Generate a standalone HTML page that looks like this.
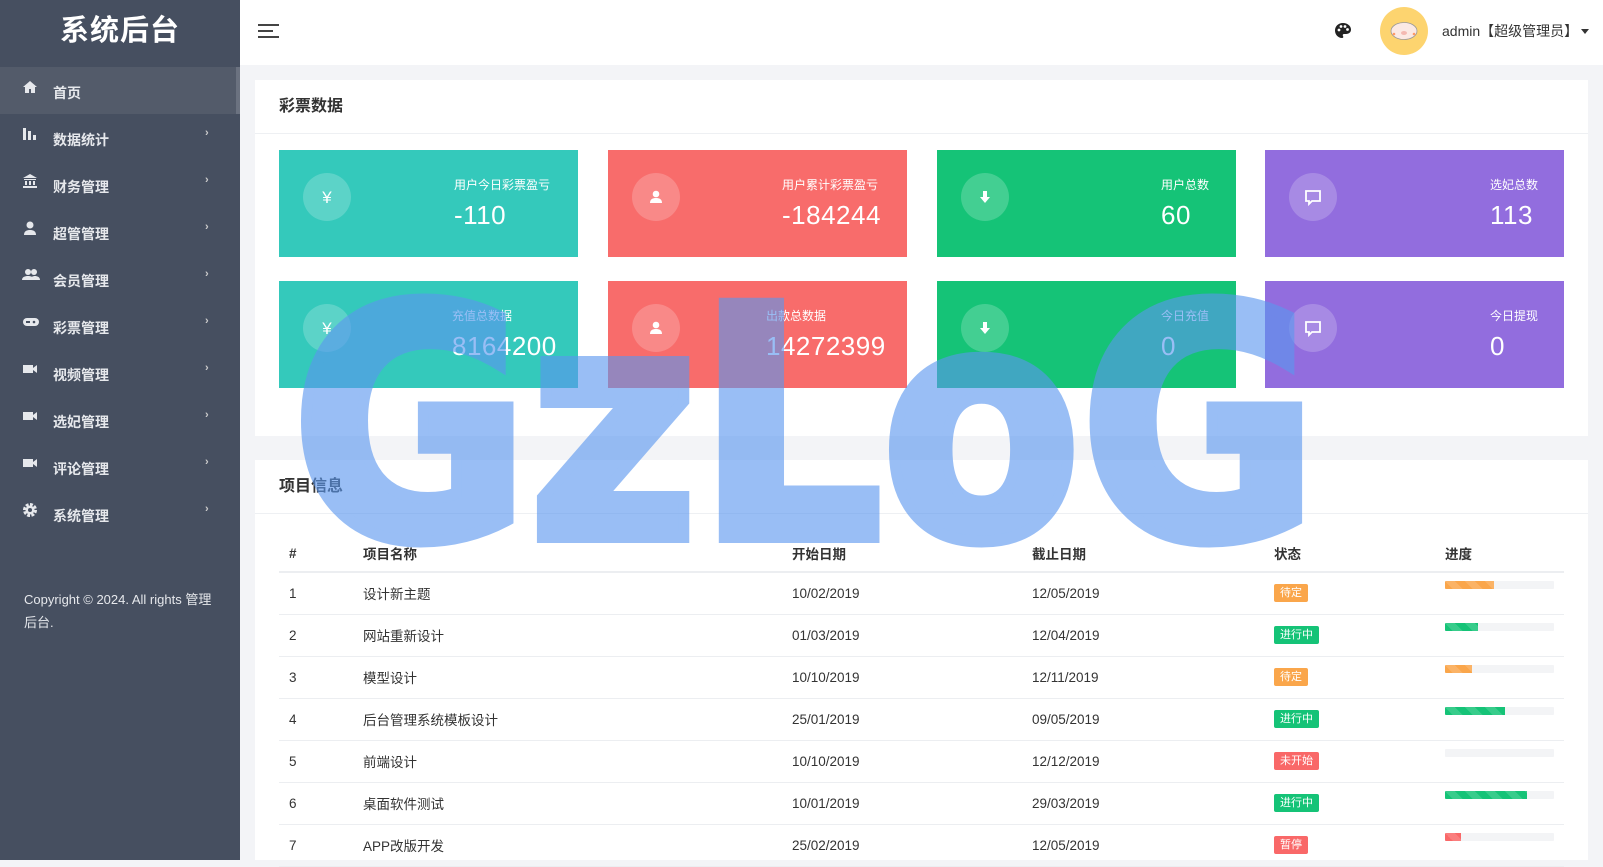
<!DOCTYPE html>
<html><head><meta charset="utf-8"><style>
*{margin:0;padding:0;box-sizing:border-box}
body{width:1603px;height:860px;overflow:hidden;background:#f3f4f7;font-family:"Liberation Sans","Noto Sans CJK SC",sans-serif;position:relative;color:#333}
.side{position:absolute;left:0;top:0;width:240px;height:860px;background:#464f60}
.logo{height:67px;color:#fff;font-size:29px;text-align:center;line-height:62px;font-weight:bold;letter-spacing:1px}
.item{height:47px;position:relative;color:#e6e8ec;font-size:14px;font-weight:bold}
.item.act{background:#535b6a;border-right:4px solid #6b7280}
.item .t{position:absolute;left:53px;top:16px}
.item svg{position:absolute;left:22px;top:12px}
.item .ar{position:absolute;left:205px;top:13px;font-size:11px;color:#ccc}
.copy{position:absolute;left:24px;top:588px;color:#e6e8ec;font-size:13px;line-height:23px;width:195px}
.head{position:absolute;left:240px;top:0;width:1363px;height:65px;background:#fff}
.panel{position:absolute;left:255px;width:1333px;background:#fff}
.ptitle{height:54px;border-bottom:1px solid #eef0f3;padding-left:24px;line-height:54px;font-size:16px;font-weight:bold;color:#333}
.card{position:absolute;width:299px;height:107px;color:#fff}
.card .ic{position:absolute;left:24px;top:23px;width:48px;height:48px;border-radius:50%;background:rgba(255,255,255,.2)}
.card .ic svg{position:absolute;left:14px;top:14px}
.card .tx{position:absolute;top:27px;white-space:nowrap}
.card .l{font-size:12px;line-height:16px}
.card .v{font-size:26px;line-height:34px;margin-top:5px;letter-spacing:.5px}
.c1{background:#34c9bb}.c2{background:#f86c6b}.c3{background:#15c377}.c4{background:#926dde}
table{position:absolute;left:24px;top:75px;width:1285px;border-collapse:collapse;font-size:13.5px}
th{text-align:left;font-weight:bold;height:37px;border-bottom:2px solid #eceef1;padding-left:10px;vertical-align:middle}
td{height:42px;border-bottom:1px solid #eceef1;padding-left:10px;vertical-align:middle}
.b{display:inline-block;font-size:11px;color:#fff;padding:0 6px;height:18px;line-height:18px;border-radius:2px;margin-left:0}
.o{background:#faa64b}.g{background:#15c377}.r{background:#f96868}
.bar{width:109px;height:8px;background:#f3f4f6;margin-top:-12px;border-radius:1px;overflow:hidden}
.bar i{display:block;height:8px;background-image:linear-gradient(45deg,rgba(255,255,255,.15) 25%,transparent 25%,transparent 50%,rgba(255,255,255,.15) 50%,rgba(255,255,255,.15) 75%,transparent 75%);background-size:20px 20px}
</style></head><body>
<div class="side">
<div class="logo">系统后台</div>
<div class="item act"><svg width="16" height="16" viewBox="0 0 16 16"><path d="M8 2L1 8h2v6h4v-4h2v4h4V8h2z" fill="#e6e8ec"/></svg><span class="t">首页</span></div>
<div class="item"><svg width="16" height="16"><rect x="1" y="2" width="3" height="12" fill="#e6e8ec"/><rect x="6" y="5" width="3" height="9" fill="#e6e8ec"/><rect x="11" y="9" width="3" height="5" fill="#e6e8ec"/></svg><span class="t">数据统计</span><span class="ar">›</span></div>
<div class="item"><svg width="16" height="16"><path d="M8 1L1 5h14z M2 6h12v1H2z M3 8h2v4H3z M7 8h2v4H7z M11 8h2v4h-2z M1 13h14v2H1z" fill="#e6e8ec"/></svg><span class="t">财务管理</span><span class="ar">›</span></div>
<div class="item"><svg width="16" height="16"><circle cx="8" cy="5" r="3.5" fill="#e6e8ec"/><path d="M2 15c0-4 3-5 6-5s6 1 6 5z" fill="#e6e8ec"/></svg><span class="t">超管管理</span><span class="ar">›</span></div>
<div class="item"><svg width="18" height="16"><circle cx="6" cy="5" r="3" fill="#e6e8ec"/><circle cx="12" cy="5" r="3" fill="#e6e8ec"/><path d="M0 13c0-3 3-4 6-4s6 1 6 4zM8 13c0-3 3-4 5-4s5 1 5 4z" fill="#e6e8ec"/></svg><span class="t">会员管理</span><span class="ar">›</span></div>
<div class="item"><svg width="18" height="16"><rect x="1" y="4" width="16" height="8" rx="4" fill="#e6e8ec"/><circle cx="12" cy="8" r="1.3" fill="#464f60"/><rect x="4" y="7" width="4" height="2" fill="#464f60"/></svg><span class="t">彩票管理</span><span class="ar">›</span></div>
<div class="item"><svg width="16" height="16"><rect x="1" y="4" width="10" height="8" fill="#e6e8ec"/><path d="M11 7l4-3v8l-4-3z" fill="#e6e8ec"/></svg><span class="t">视频管理</span><span class="ar">›</span></div>
<div class="item"><svg width="16" height="16"><rect x="1" y="4" width="10" height="8" fill="#e6e8ec"/><path d="M11 7l4-3v8l-4-3z" fill="#e6e8ec"/></svg><span class="t">选妃管理</span><span class="ar">›</span></div>
<div class="item"><svg width="16" height="16"><rect x="1" y="4" width="10" height="8" fill="#e6e8ec"/><path d="M11 7l4-3v8l-4-3z" fill="#e6e8ec"/></svg><span class="t">评论管理</span><span class="ar">›</span></div>
<div class="item"><svg width="16" height="16"><circle cx="8" cy="8" r="5" fill="none" stroke="#e6e8ec" stroke-width="4" stroke-dasharray="2.6 1.3"/><circle cx="8" cy="8" r="4.5" fill="#e6e8ec"/><circle cx="8" cy="8" r="2" fill="#464f60"/></svg><span class="t">系统管理</span><span class="ar">›</span></div>
<div class="copy">Copyright © 2024. All rights 管理后台.</div>
</div>
<div class="head">
<svg style="position:absolute;left:18px;top:24px" width="21" height="15"><rect y="0" width="21" height="2" fill="#444"/><rect y="6" width="15" height="2" fill="#444"/><rect y="12" width="21" height="2" fill="#444"/></svg>
<svg style="position:absolute;left:1094px;top:22px" width="18" height="17" viewBox="0 0 18 17"><path d="M9 1C4 1 1 4.5 1 8.5S4 16 8 16c1.5 0 1.5-1.2 1-2-.6-1 0-2 1.2-2H12c3 0 5-1.8 5-4.5C17 4 13.5 1 9 1z" fill="#222"/><circle cx="5" cy="8" r="1.4" fill="#fff"/><circle cx="7" cy="4.5" r="1.4" fill="#fff"/><circle cx="11" cy="4.5" r="1.4" fill="#fff"/><circle cx="13.5" cy="7.5" r="1.4" fill="#fff"/></svg>
<div style="position:absolute;left:1140px;top:7px;width:48px;height:48px;border-radius:50%;background:#fdd46f"></div>
<svg style="position:absolute;left:1149px;top:20px" width="30" height="21"><ellipse cx="15" cy="11" rx="13" ry="8.5" fill="#fbe9e4" stroke="#999" stroke-width=".8"/><ellipse cx="15" cy="13" rx="3" ry="2" fill="#f4b9b2"/><circle cx="5" cy="14" r="1.3" fill="#f96"/><circle cx="25" cy="14" r="1.3" fill="#f96"/></svg>
<div style="position:absolute;left:1202px;top:21px;font-size:14px;color:#333">admin【超级管理员】</div>
<div style="position:absolute;left:1341px;top:29px;border:4px solid transparent;border-top:5px solid #333"></div>
</div>
<div class="panel" style="top:80px;height:356px">
<div class="ptitle">彩票数据</div>
<div class="card c1" style="left:24px;top:70px"><div class="ic"><svg width="20" height="20"><text x="10" y="16" font-size="17" fill="#fff" text-anchor="middle" font-family="Liberation Sans">¥</text></svg></div><div class="tx" style="left:175px"><div class="l">用户今日彩票盈亏</div><div class="v">-110</div></div></div>
<div class="card c2" style="left:353px;top:70px"><div class="ic"><svg width="20" height="20"><circle cx="10" cy="7" r="3.3" fill="#fff"/><path d="M4 16c0-4 3-5 6-5s6 1 6 5z" fill="#fff"/></svg></div><div class="tx" style="left:174px"><div class="l">用户累计彩票盈亏</div><div class="v">-184244</div></div></div>
<div class="card c3" style="left:682px;top:70px"><div class="ic"><svg width="20" height="20"><path d="M8 4h4v6h3l-5 6-5-6h3z" fill="#fff"/></svg></div><div class="tx" style="left:224px"><div class="l">用户总数</div><div class="v">60</div></div></div>
<div class="card c4" style="left:1010px;top:70px"><div class="ic"><svg width="20" height="20"><path d="M3 4h14v10H9l-3 3v-3H3z" fill="none" stroke="#fff" stroke-width="1.8"/></svg></div><div class="tx" style="left:225px"><div class="l">选妃总数</div><div class="v">113</div></div></div>
<div class="card c1" style="left:24px;top:201px"><div class="ic"><svg width="20" height="20"><text x="10" y="16" font-size="17" fill="#fff" text-anchor="middle" font-family="Liberation Sans">¥</text></svg></div><div class="tx" style="left:173px"><div class="l">充值总数据</div><div class="v">8164200</div></div></div>
<div class="card c2" style="left:353px;top:201px"><div class="ic"><svg width="20" height="20"><circle cx="10" cy="7" r="3.3" fill="#fff"/><path d="M4 16c0-4 3-5 6-5s6 1 6 5z" fill="#fff"/></svg></div><div class="tx" style="left:158px"><div class="l">出款总数据</div><div class="v">14272399</div></div></div>
<div class="card c3" style="left:682px;top:201px"><div class="ic"><svg width="20" height="20"><path d="M8 4h4v6h3l-5 6-5-6h3z" fill="#fff"/></svg></div><div class="tx" style="left:224px"><div class="l">今日充值</div><div class="v">0</div></div></div>
<div class="card c4" style="left:1010px;top:201px"><div class="ic"><svg width="20" height="20"><path d="M3 4h14v10H9l-3 3v-3H3z" fill="none" stroke="#fff" stroke-width="1.8"/></svg></div><div class="tx" style="left:225px"><div class="l">今日提现</div><div class="v">0</div></div></div>
</div>
<div class="panel" style="top:460px;height:400px">
<div class="ptitle">项目信息</div>
<table>
<tr><th style="width:74px">#</th><th style="width:429px">项目名称</th><th style="width:240px">开始日期</th><th style="width:242px">截止日期</th><th style="width:171px">状态</th><th>进度</th></tr>
<tr><td>1</td><td>设计新主题</td><td>10/02/2019</td><td>12/05/2019</td><td><span class="b o">待定</span></td><td><div class="bar"><i style="width:45%;background-color:#faa64b"></i></div></td></tr>
<tr><td>2</td><td>网站重新设计</td><td>01/03/2019</td><td>12/04/2019</td><td><span class="b g">进行中</span></td><td><div class="bar"><i style="width:30%;background-color:#15c377"></i></div></td></tr>
<tr><td>3</td><td>模型设计</td><td>10/10/2019</td><td>12/11/2019</td><td><span class="b o">待定</span></td><td><div class="bar"><i style="width:25%;background-color:#faa64b"></i></div></td></tr>
<tr><td>4</td><td>后台管理系统模板设计</td><td>25/01/2019</td><td>09/05/2019</td><td><span class="b g">进行中</span></td><td><div class="bar"><i style="width:55%;background-color:#15c377"></i></div></td></tr>
<tr><td>5</td><td>前端设计</td><td>10/10/2019</td><td>12/12/2019</td><td><span class="b r">未开始</span></td><td><div class="bar"><i style="width:0"></i></div></td></tr>
<tr><td>6</td><td>桌面软件测试</td><td>10/01/2019</td><td>29/03/2019</td><td><span class="b g">进行中</span></td><td><div class="bar"><i style="width:75%;background-color:#15c377"></i></div></td></tr>
<tr><td>7</td><td>APP改版开发</td><td>25/02/2019</td><td>12/05/2019</td><td><span class="b r">暂停</span></td><td><div class="bar"><i style="width:15%;background-color:#f96868"></i></div></td></tr>
</table>
</div>
<svg style="position:absolute;left:0;top:0" width="1603" height="860"><g opacity="0.62"><text x="292" y="537" font-family="DejaVu Sans" font-weight="bold" font-size="320" textLength="1026" lengthAdjust="spacingAndGlyphs" fill="#5b97ef" stroke="#5b97ef" stroke-width="12" stroke-linejoin="miter">GzLoG</text></g></svg>
</body></html>
